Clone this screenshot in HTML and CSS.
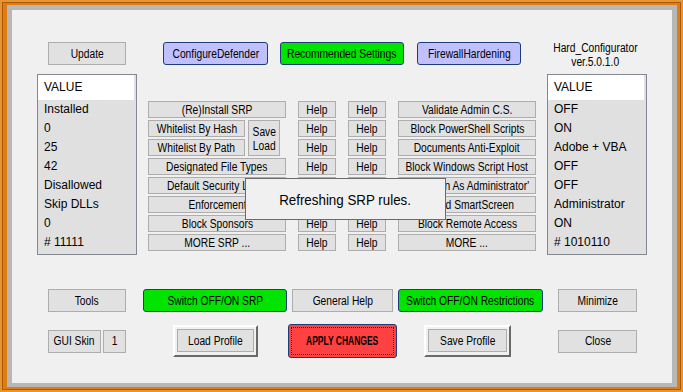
FILE: index.html
```html
<!DOCTYPE html>
<html lang="en">
<head>
    <meta charset="UTF-8">
    <title>Hard_Configurator</title>
    <link rel="stylesheet" href="styles.css">
</head>
<body>
    <div class="window">
        <div class="inner">
            <div class="content">

                <div class="top-row">
                    <button class="btn btn-update"><span>Update</span></button>
                    <button class="btn btn-blue btn-defender"><span>ConfigureDefender</span></button>
                    <button class="btn btn-green btn-recommended"><span>Recommended Settings</span></button>
                    <button class="btn btn-blue btn-firewall"><span>FirewallHardening</span></button>
                    <div class="title"><span>Hard_Configurator</span><span>ver.5.0.1.0</span></div>
                </div>

                <div class="main">
                    <div class="list list-left">
                        <div class="list-head">VALUE</div>
                        <div class="list-item">Installed</div>
                        <div class="list-item">0</div>
                        <div class="list-item">25</div>
                        <div class="list-item">42</div>
                        <div class="list-item">Disallowed</div>
                        <div class="list-item">Skip DLLs</div>
                        <div class="list-item">0</div>
                        <div class="list-item"># 11111</div>
                    </div>

                    <div class="grid">
                        <button class="sbtn"><span>(Re)Install SRP</span></button>
                        <button class="sbtn"><span>Help</span></button>
                        <button class="sbtn"><span>Help</span></button>
                        <button class="sbtn"><span>Validate Admin C.S.</span></button>

                        <div class="whitelist">
                            <button class="sbtn"><span>Whitelist By Hash</span></button>
                            <button class="sbtn save-load"><span>Save<br>Load</span></button>
                            <button class="sbtn"><span>Whitelist By Path</span></button>
                        </div>
                        <button class="sbtn"><span>Help</span></button>
                        <button class="sbtn"><span>Help</span></button>
                        <button class="sbtn"><span>Block PowerShell Scripts</span></button>
                        <button class="sbtn"><span>Help</span></button>
                        <button class="sbtn"><span>Help</span></button>
                        <button class="sbtn"><span>Documents Anti-Exploit</span></button>

                        <button class="sbtn"><span>Designated File Types</span></button>
                        <button class="sbtn"><span>Help</span></button>
                        <button class="sbtn"><span>Help</span></button>
                        <button class="sbtn"><span>Block Windows Script Host</span></button>

                        <button class="sbtn"><span>Default Security Level</span></button>
                        <button class="sbtn"><span>Help</span></button>
                        <button class="sbtn"><span>Help</span></button>
                        <button class="sbtn"><span>Hide 'Run As Administrator'</span></button>

                        <button class="sbtn"><span>Enforcement</span></button>
                        <button class="sbtn"><span>Help</span></button>
                        <button class="sbtn"><span>Help</span></button>
                        <button class="sbtn"><span>Forced SmartScreen</span></button>

                        <button class="sbtn"><span>Block Sponsors</span></button>
                        <button class="sbtn"><span>Help</span></button>
                        <button class="sbtn"><span>Help</span></button>
                        <button class="sbtn"><span>Block Remote Access</span></button>

                        <button class="sbtn"><span>MORE SRP ...</span></button>
                        <button class="sbtn"><span>Help</span></button>
                        <button class="sbtn"><span>Help</span></button>
                        <button class="sbtn"><span>MORE ...</span></button>
                    </div>

                    <div class="list list-right">
                        <div class="list-head">VALUE</div>
                        <div class="list-item">OFF</div>
                        <div class="list-item">ON</div>
                        <div class="list-item">Adobe + VBA</div>
                        <div class="list-item">OFF</div>
                        <div class="list-item">OFF</div>
                        <div class="list-item">Administrator</div>
                        <div class="list-item">ON</div>
                        <div class="list-item"># 1010110</div>
                    </div>
                </div>

                <div class="row-a">
                    <button class="btn btn-tools"><span>Tools</span></button>
                    <button class="btn btn-green btn-switch-srp"><span>Switch OFF/ON SRP</span></button>
                    <button class="btn btn-general"><span>General Help</span></button>
                    <button class="btn btn-green btn-switch-res"><span>Switch OFF/ON Restrictions</span></button>
                    <button class="btn btn-minimize"><span>Minimize</span></button>
                </div>

                <div class="row-b">
                    <button class="btn btn-skin"><span>GUI Skin</span></button>
                    <button class="btn btn-one"><span>1</span></button>
                    <div class="frame-btn frame-load"><button class="btn"><span>Load Profile</span></button></div>
                    <div class="btn-apply"><div class="focus"><span>APPLY CHANGES</span></div></div>
                    <div class="frame-btn frame-save"><button class="btn"><span>Save Profile</span></button></div>
                    <button class="btn btn-close"><span>Close</span></button>
                </div>

                <div class="popup"><span>Refreshing SRP rules.</span></div>
            </div>
        </div>
    </div>
</body>
</html>
```

FILE: styles.css
```css
*{
    margin: 0;
    padding: 0;
    box-sizing: border-box;
}

body{
    width: 683px;
    height: 392px;
    overflow: hidden;
    font-family: "Liberation Sans", Arial, sans-serif;
    font-size: 12.5px;
    color: #000;
}

/* window frame */
.window{
    height: 392px;
    padding: 5px 6px 5px 7px;
    background: #df7d12;
    box-shadow: inset 0 0 0 2px #e8952f, inset 0 0 0 3px #a9580c;
}

.inner{
    height: 100%;
    border: 5px solid #b7b7b7;
    border-bottom-width: 4px;
    background: #f0f0f0;
}

.content{
    position: relative;
    height: 100%;
    padding-top: 32px;
}

/* the app font is a narrow one, squeeze the text to match */
.btn span,
.sbtn span,
.title span,
.btn-apply span{
    display: inline-block;
    transform: scaleX(0.82);
    white-space: nowrap;
}

/* buttons */
.btn{
    font: inherit;
    color: #000;
    height: 23px;
    background: #e1e1e1;
    border: 1px solid #adadad;
    display: flex;
    align-items: center;
    justify-content: center;
}

.btn-blue{
    background: #c0c0ff;
    border-color: #1d3c78;
    border-radius: 3px;
}

.btn-green{
    background: #00e400;
    border-color: #1d3c78;
    border-radius: 3px;
}

.top-row{
    display: flex;
    height: 23px;
}

.btn-update{ margin-left: 36px; width: 78px; }
.btn-defender{ margin-left: 37px; width: 105px; }
.btn-recommended{ margin-left: 12px; width: 124px; }
.btn-firewall{ margin-left: 13px; width: 104px; }

.title{
    margin-left: 24px;
    margin-top: -1px;
    width: 100px;
    display: flex;
    flex-direction: column;
    align-items: center;
    line-height: 14px;
}

/* lists */
.main{
    display: flex;
    margin-top: 9px;
    height: 181px;
}

.list{
    width: 100px;
    height: 181px;
    border: 1px solid #828790;
    background: #e0e0e0;
    font-size: 12px;
}

.list-left{ margin-left: 25px; }
.list-right{ margin-left: 11px; }

.list-head{
    height: 25px;
    line-height: 25px;
    margin-right: 2px;
    padding-left: 6px;
    background: #fff;
}

.list-item{
    height: 19px;
    line-height: 19px;
    padding-left: 6px;
}

/* middle buttons */
.grid{
    margin-left: 11px;
    margin-top: 27px;
    display: grid;
    grid-template-columns: 138px 38px 38px 138px;
    grid-template-rows: repeat(8, 17px);
    column-gap: 12px;
    row-gap: 2px;
    height: 150px;
}

.sbtn{
    font: inherit;
    color: #000;
    height: 17px;
    background: #e1e1e1;
    border: 1px solid #adadad;
    display: flex;
    align-items: center;
    justify-content: center;
}

.whitelist{
    grid-row: span 2;
    display: grid;
    grid-template-columns: 97px 32px;
    grid-template-rows: 17px 17px;
    column-gap: 3px;
    row-gap: 2px;
}

.save-load{
    grid-column: 2;
    grid-row: 1 / span 2;
    height: 36px;
    line-height: 14px;
    padding-top: 2px;
}

/* bottom rows */
.row-a{
    display: flex;
    margin-top: 34px;
    height: 23px;
}

.btn-tools{ margin-left: 36px; width: 78px; }
.btn-switch-srp{ margin-left: 17px; width: 144px; }
.btn-general{ margin-left: 5px; width: 101px; }
.btn-switch-res{ margin-left: 5px; width: 145px; }
.btn-minimize{ margin-left: 15px; width: 79px; }

.row-b{
    display: flex;
    align-items: center;
    margin-top: 12px;
    height: 34px;
}

.btn-skin{ margin-left: 36px; width: 53px; }
.btn-one{ margin-left: 2px; width: 23px; }

.frame-btn{
    height: 32px;
    padding: 2px;
    border: 2px solid;
    border-color: #ffffff #696969 #696969 #ffffff;
    background: #f0f0f0;
}

.frame-btn .btn{
    width: 100%;
}

.frame-load{ margin-left: 47px; width: 85px; }
.frame-save{ margin-left: 27px; width: 87px; }

.btn-apply{
    margin-left: 30px;
    width: 109px;
    height: 34px;
    padding: 2px;
    background: #ff4141;
    border: 1px solid #1d3c78;
    border-radius: 3px;
    font-size: 12.5px;
    font-weight: bold;
}

.btn-apply .focus{
    display: flex;
    align-items: center;
    justify-content: center;
    height: 100%;
    border: 1px dotted #000;
}

.btn-apply span{
    transform: scaleX(0.68);
}

.btn-close{ margin-left: 47px; width: 79px; }

/* status popup */
.popup{
    position: absolute;
    left: 233px;
    top: 168px;
    width: 201px;
    height: 42px;
    border: 1px solid #6b6b6b;
    background: #f0f0f0;
    font-size: 15px;
    display: flex;
    align-items: center;
    justify-content: center;
}

.popup span{
    display: inline-block;
    transform: scaleX(0.89);
    white-space: nowrap;
}
```
